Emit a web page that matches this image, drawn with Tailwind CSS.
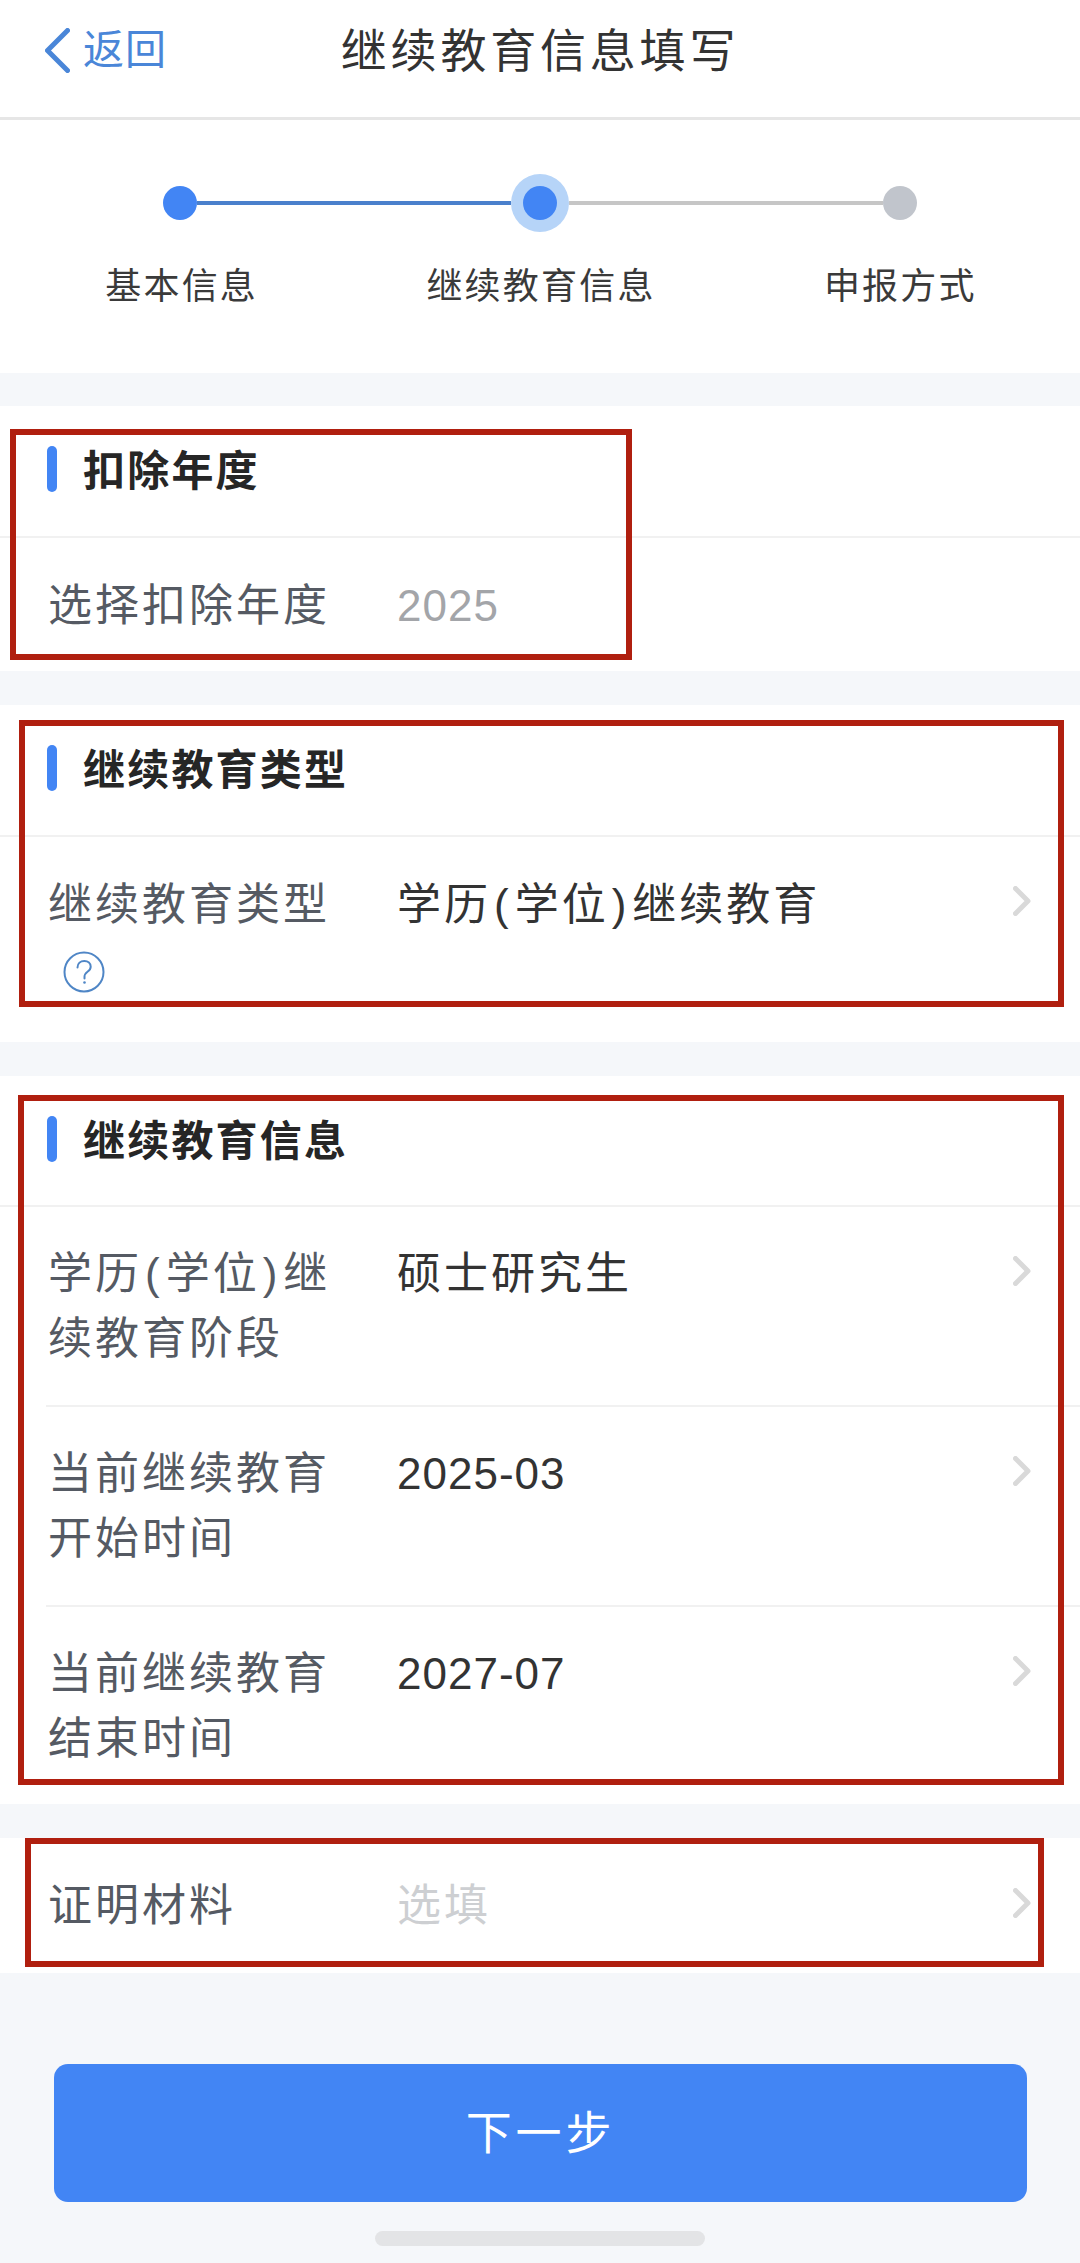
<!doctype html>
<html lang="zh-CN">
<head>
<meta charset="utf-8">
<script src="https://cdn.jsdelivr.net/npm/@tailwindcss/browser@4"></script>
</head>
<body>
<div class="relative w-[1080px] h-[2263px] overflow-hidden bg-[#f5f7fa] text-[#333] [font-family:'Liberation_Sans','Noto_Sans_CJK_SC',sans-serif]">

  <!-- nav -->
  <header class="flex items-center h-[120px] pb-[16px] bg-white border-b-[3px] border-[#e6e6e6]">
    <div class="flex-1 flex items-center pl-[45px] gap-[13px] text-[#4a86d8] text-[41px] tracking-[1px]">
      <svg class="w-[25px] h-[45px]" viewBox="0 0 25 45" fill="none" stroke="#4a86d8" stroke-width="5" stroke-linecap="round" stroke-linejoin="round"><path d="M22.5 2.5 2.5 22.5 22.5 42.5"/></svg>
      <span class="leading-none">返回</span>
    </div>
    <h1 class="text-[46px] tracking-[3.8px] font-normal leading-none text-[#333]">继续教育信息填写</h1>
    <div class="flex-1 pr-[45px]"></div>
  </header>

  <!-- stepper -->
  <section class="h-[253px] bg-white pt-[54px]">
    <div class="flex items-center h-[58px] px-[163px]">
      <span class="w-[34px] h-[34px] rounded-full bg-[#4285f4]"></span>
      <span class="flex-1 h-[4px] bg-[#4a80cc]"></span>
      <span class="flex items-center justify-center w-[58px] h-[58px] rounded-full bg-[#b6d4f8]"><span class="w-[34px] h-[34px] rounded-full bg-[#4285f4]"></span></span>
      <span class="flex-1 h-[4px] bg-[#c6c6c6]"></span>
      <span class="w-[34px] h-[34px] rounded-full bg-[#c1c5cc]"></span>
    </div>
    <div class="grid grid-cols-3 mt-[29px] pl-[2px] text-center text-[36px] tracking-[2.2px] leading-[52px] text-[#3a3a3a]">
      <span>基本信息</span><span>继续教育信息</span><span>申报方式</span>
    </div>
  </section>

  <!-- 扣除年度 -->
  <section class="mt-[33px] bg-white">
    <div class="flex items-center gap-[26px] h-[132px] pl-[47px] pb-[5px] border-b-2 border-[#f1f1f1]">
      <span class="w-[10px] h-[46px] rounded-full bg-[#4285f4]"></span>
      <h2 class="mt-[5px] text-[42px] tracking-[2.2px] font-bold text-[#262626]">扣除年度</h2>
    </div>
    <div class="flex pl-[48px] pt-[35px] pb-[33px] text-[44px] tracking-[3px] leading-[65px]">
      <span class="w-[349px] flex-none text-[#555a63]">选择扣除年度</span>
      <span class="text-[#a3a5a9] tracking-[1px]">2025</span>
    </div>
  </section>

  <!-- 继续教育类型 -->
  <section class="mt-[34px] bg-white">
    <div class="flex items-center gap-[26px] h-[132px] pl-[47px] pb-[5px] border-b-2 border-[#f1f1f1]">
      <span class="w-[10px] h-[46px] rounded-full bg-[#4285f4]"></span>
      <h2 class="mt-[5px] text-[42px] tracking-[2.2px] font-bold text-[#262626]">继续教育类型</h2>
    </div>
    <div class="flex pl-[48px] pr-[49px] pt-[35px] pb-[40px] text-[44px] tracking-[3px] leading-[65px]">
      <div class="w-[349px] flex-none text-[#555a63]">
        <div>继续教育类型</div>
        <div class="flex items-center h-[65px] pl-[15px]">
          <svg class="w-[42px] h-[42px] mt-[4px]" viewBox="0 0 42 42" fill="none" stroke="#4f86c6" stroke-width="2"><circle cx="21" cy="21" r="19.5"/><path d="M14.5 16.5c0-4 3-6.5 6.8-6.5 3.7 0 6.4 2.4 6.4 5.7 0 2.5-1.4 3.8-3.2 5.1-1.9 1.4-3 2.5-3 5v1.7" stroke-linecap="round"/><circle cx="21.5" cy="31.5" r="1.3" fill="#4f86c6" stroke="none"/></svg>
        </div>
      </div>
      <span class="text-[#333]">学历<span class="mx-[3px]">(</span>学位<span class="mx-[3px]">)</span>继续教育</span>
      <svg class="ml-auto mt-[14px] flex-none w-[18px] h-[30px]" viewBox="0 0 18 30" fill="none" stroke="#d9d9d9" stroke-width="5" stroke-linecap="round" stroke-linejoin="round"><path d="M2.5 2.5 15 15 2.5 27.5"/></svg>
    </div>
  </section>

  <!-- 继续教育信息 -->
  <section class="mt-[34px] bg-white">
    <div class="flex items-center gap-[26px] h-[131px] pl-[47px] pb-[4px] border-b-2 border-[#f1f1f1]">
      <span class="w-[10px] h-[46px] rounded-full bg-[#4285f4]"></span>
      <h2 class="mt-[5px] text-[42px] tracking-[2.2px] font-bold text-[#262626]">继续教育信息</h2>
    </div>
    <div class="ml-[46px]">
      <div class="flex pl-[2px] pr-[49px] pt-[34px] pb-[34px] border-b-2 border-[#f1f1f1] text-[44px] tracking-[3px] leading-[65px]">
        <span class="w-[349px] pr-[60px] flex-none text-[#555a63]">学历<span class="mx-[3px]">(</span>学位<span class="mx-[3px]">)</span>继续教育阶段</span>
        <span class="text-[#333]">硕士研究生</span>
        <svg class="ml-auto mt-[15px] flex-none w-[18px] h-[30px]" viewBox="0 0 18 30" fill="none" stroke="#d9d9d9" stroke-width="5" stroke-linecap="round" stroke-linejoin="round"><path d="M2.5 2.5 15 15 2.5 27.5"/></svg>
      </div>
      <div class="flex pl-[2px] pr-[49px] pt-[34px] pb-[34px] border-b-2 border-[#f1f1f1] text-[44px] tracking-[3px] leading-[65px]">
        <span class="w-[349px] pr-[60px] flex-none text-[#555a63]">当前继续教育开始时间</span>
        <span class="text-[#333] tracking-[1px]">2025-03</span>
        <svg class="ml-auto mt-[15px] flex-none w-[18px] h-[30px]" viewBox="0 0 18 30" fill="none" stroke="#d9d9d9" stroke-width="5" stroke-linecap="round" stroke-linejoin="round"><path d="M2.5 2.5 15 15 2.5 27.5"/></svg>
      </div>
      <div class="flex pl-[2px] pr-[49px] pt-[34px] pb-[33px] text-[44px] tracking-[3px] leading-[65px]">
        <span class="w-[349px] pr-[60px] flex-none text-[#555a63]">当前继续教育结束时间</span>
        <span class="text-[#333] tracking-[1px]">2027-07</span>
        <svg class="ml-auto mt-[15px] flex-none w-[18px] h-[30px]" viewBox="0 0 18 30" fill="none" stroke="#d9d9d9" stroke-width="5" stroke-linecap="round" stroke-linejoin="round"><path d="M2.5 2.5 15 15 2.5 27.5"/></svg>
      </div>
    </div>
  </section>

  <!-- 证明材料 -->
  <section class="mt-[34px] bg-white flex pl-[48px] pr-[49px] pt-[35px] pb-[35px] text-[44px] tracking-[3px] leading-[65px]">
    <span class="w-[349px] flex-none text-[#555a63]">证明材料</span>
    <span class="text-[#cdcfd2]">选填</span>
    <svg class="ml-auto mt-[15px] flex-none w-[18px] h-[30px]" viewBox="0 0 18 30" fill="none" stroke="#d9d9d9" stroke-width="5" stroke-linecap="round" stroke-linejoin="round"><path d="M2.5 2.5 15 15 2.5 27.5"/></svg>
  </section>

  <!-- button -->
  <button class="block mt-[91px] ml-[54px] w-[973px] h-[138px] rounded-[14px] bg-[#4285f4] text-white text-[46px] tracking-[3.8px]">下一步</button>

  <!-- home indicator -->
  <div class="mt-[29px] mx-auto w-[330px] h-[15px] rounded-full bg-[#e3e4e6]"></div>

  <!-- red annotation boxes -->
  <div class="absolute left-[10px] top-[429px] w-[622px] h-[231px] border-[6px] border-[#b01f0f]"></div>
  <div class="absolute left-[19px] top-[720px] w-[1045px] h-[287px] border-[6px] border-[#b01f0f]"></div>
  <div class="absolute left-[18px] top-[1095px] w-[1046px] h-[690px] border-[6px] border-[#b01f0f]"></div>
  <div class="absolute left-[25px] top-[1838px] w-[1019px] h-[129px] border-[6px] border-[#b01f0f]"></div>
</div>
</body>
</html>
